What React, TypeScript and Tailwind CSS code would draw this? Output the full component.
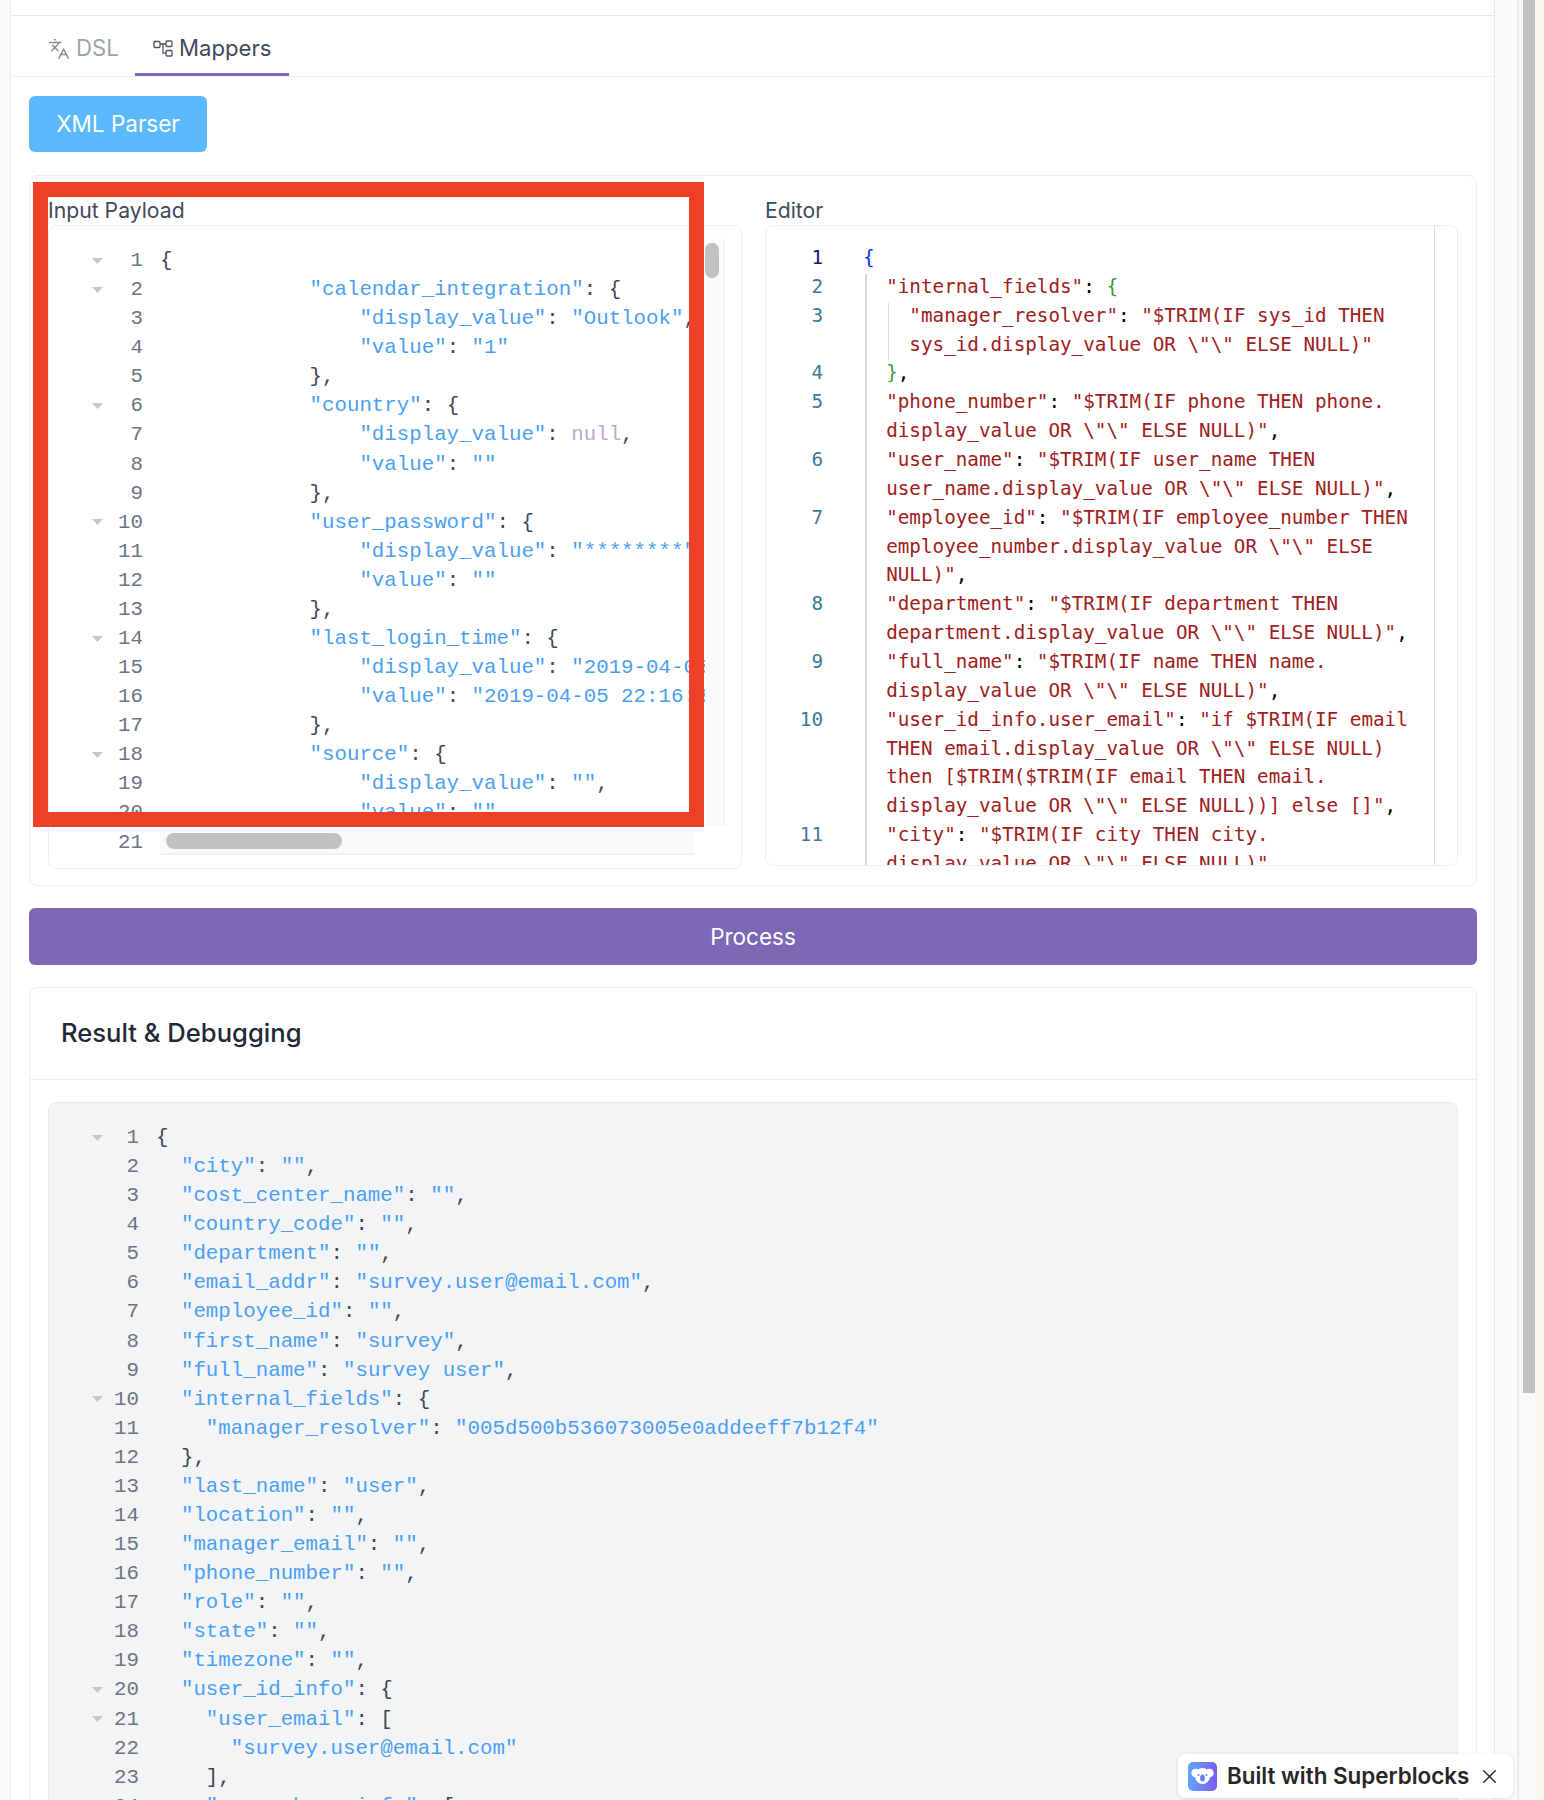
import { Languages, X } from "lucide-react";

const MONO = "font-['Liberation_Mono',monospace] text-[20.77px] leading-[29.08px]";
const DEJAVU = "font-['DejaVu_Sans_Mono',monospace] text-[19.25px] leading-[28.87px]";

const RED = "text-[#a02020]";
const BLACK = "text-black";
const BLUE = "text-[#0431fa]";
const GREEN = "text-[#3f9440]";

const inputLines = [
  "{",
  '            "calendar_integration": {',
  '                "display_value": "Outlook",',
  '                "value": "1"',
  "            },",
  '            "country": {',
  '                "display_value": null,',
  '                "value": ""',
  "            },",
  '            "user_password": {',
  '                "display_value": "********",',
  '                "value": ""',
  "            },",
  '            "last_login_time": {',
  '                "display_value": "2019-04-05 22:16:33",',
  '                "value": "2019-04-05 22:16:33"',
  "            },",
  '            "source": {',
  '                "display_value": "",',
  '                "value": ""',
  "            },",
];

const outputLines = [
  "{",
  '  "city": "",',
  '  "cost_center_name": "",',
  '  "country_code": "",',
  '  "department": "",',
  '  "email_addr": "survey.user@email.com",',
  '  "employee_id": "",',
  '  "first_name": "survey",',
  '  "full_name": "survey user",',
  '  "internal_fields": {',
  '    "manager_resolver": "005d500b536073005e0addeeff7b12f4"',
  "  },",
  '  "last_name": "user",',
  '  "location": "",',
  '  "manager_email": "",',
  '  "phone_number": "",',
  '  "role": "",',
  '  "state": "",',
  '  "timezone": "",',
  '  "user_id_info": {',
  '    "user_email": [',
  '      "survey.user@email.com"',
  "    ],",
  '    "user_phone_info": [',
];

type Part = [string, string];
type EditorRow = { n?: number; indent: number; parts: Part[] };

const key = (name: string, value: string, tail = ""): Part[] => [
  [name, RED],
  [": ", BLACK],
  [value, RED],
  [tail, BLACK],
];

const editorRows: EditorRow[] = [
  { n: 1, indent: 0, parts: [["{", BLUE]] },
  { n: 2, indent: 2, parts: [['"internal_fields"', RED], [": ", BLACK], ["{", GREEN]] },
  { n: 3, indent: 4, parts: key('"manager_resolver"', '"$TRIM(IF sys_id THEN') },
  { indent: 4, parts: [['sys_id.display_value OR \\"\\" ELSE NULL)"', RED]] },
  { n: 4, indent: 2, parts: [["}", GREEN], [",", BLACK]] },
  { n: 5, indent: 2, parts: key('"phone_number"', '"$TRIM(IF phone THEN phone.') },
  { indent: 2, parts: [['display_value OR \\"\\" ELSE NULL)"', RED], [",", BLACK]] },
  { n: 6, indent: 2, parts: key('"user_name"', '"$TRIM(IF user_name THEN') },
  { indent: 2, parts: [['user_name.display_value OR \\"\\" ELSE NULL)"', RED], [",", BLACK]] },
  { n: 7, indent: 2, parts: key('"employee_id"', '"$TRIM(IF employee_number THEN') },
  { indent: 2, parts: [['employee_number.display_value OR \\"\\" ELSE', RED]] },
  { indent: 2, parts: [['NULL)"', RED], [",", BLACK]] },
  { n: 8, indent: 2, parts: key('"department"', '"$TRIM(IF department THEN') },
  { indent: 2, parts: [['department.display_value OR \\"\\" ELSE NULL)"', RED], [",", BLACK]] },
  { n: 9, indent: 2, parts: key('"full_name"', '"$TRIM(IF name THEN name.') },
  { indent: 2, parts: [['display_value OR \\"\\" ELSE NULL)"', RED], [",", BLACK]] },
  { n: 10, indent: 2, parts: key('"user_id_info.user_email"', '"if $TRIM(IF email') },
  { indent: 2, parts: [['THEN email.display_value OR \\"\\" ELSE NULL)', RED]] },
  { indent: 2, parts: [["then [$TRIM($TRIM(IF email THEN email.", RED]] },
  { indent: 2, parts: [['display_value OR \\"\\" ELSE NULL))] else []"', RED], [",", BLACK]] },
  { n: 11, indent: 2, parts: key('"city"', '"$TRIM(IF city THEN city.') },
  { indent: 2, parts: [['display_value OR \\"\\" ELSE NULL)"', RED]] },
];

function Fold() {
  return (
    <svg width="11" height="6" viewBox="0 0 11 6" className="shrink-0">
      <path d="M0 0h11L5.5 6z" fill="#c6c7cd" />
    </svg>
  );
}

function JsonLine({ text }: { text: string }) {
  const tokens = text.match(/"[^"]*"|null|[^"n]+|n/g) ?? [];
  return (
    <span className="whitespace-pre text-[#3f4654]">
      {tokens.map((t, i) =>
        t.startsWith('"') ? (
          <span key={i} className="text-[#4b9ff2]">{t}</span>
        ) : t === "null" ? (
          <span key={i} className="text-[#c4a6cf]">{t}</span>
        ) : (
          <span key={i}>{t}</span>
        ),
      )}
    </span>
  );
}

function JsonRows({ lines, folds, numClass }: { lines: string[]; folds: number[]; numClass: string }) {
  return (
    <div className={MONO}>
      {lines.map((line, i) => (
        <div key={i} className="flex h-[29.08px] items-center">
          <div className="flex w-[54px] shrink-0 justify-start pl-[43px]">
            {folds.includes(i + 1) && <Fold />}
          </div>
          <div className={`${numClass} shrink-0 text-right text-[#6d7485]`}>{i + 1}</div>
          <JsonLine text={line} />
        </div>
      ))}
    </div>
  );
}

function MapperIcon() {
  return (
    <svg width="20" height="18" viewBox="0 0 20 18" fill="none" stroke="#4b5563" strokeWidth="1.3" className="shrink-0">
      <rect x="1" y="1.5" width="6" height="6" rx="1" />
      <rect x="13" y="1" width="6" height="5.5" rx="1" />
      <rect x="13" y="10.5" width="6" height="5.5" rx="1" />
      <path d="M7 4h6M10 4v9.2h3" />
    </svg>
  );
}

function KoalaIcon() {
  return (
    <div className="flex h-[29px] w-[29px] items-center justify-center rounded-[5px] bg-gradient-to-r from-[#5aa8fb] to-[#7a5af0]">
      <svg width="23" height="18" viewBox="0 0 23 18">
        <circle cx="4.5" cy="6" r="4.2" fill="#fff" />
        <circle cx="18.5" cy="6" r="4.2" fill="#fff" />
        <ellipse cx="11.5" cy="9" rx="7.5" ry="8" fill="#fff" />
        <circle cx="7.5" cy="8" r="1" fill="#6d7df5" />
        <circle cx="15.5" cy="8" r="1" fill="#6d7df5" />
        <ellipse cx="11.5" cy="11" rx="2.4" ry="3.6" fill="#6d7df5" />
      </svg>
    </div>
  );
}

export default function App() {
  return (
    <div className="relative flex h-[1800px] w-[1544px] overflow-hidden bg-[#f8fafc] font-['Inter',sans-serif]">
      <div className="w-[10px] shrink-0" />

      <div className="w-[1485px] shrink-0 border-x border-[#e8eaee] bg-white">
        <div className="h-[16px] border-b border-[#e5e7eb]" />

        <div className="flex h-[61px] border-b border-[#f0f1f3] pl-[20px] text-[22.16px]">
          <div className="flex h-[60px] w-[104px] items-center gap-[6px] pl-[17px] pt-[6px] text-[#9ca3af]">
            <Languages size={22} strokeWidth={1.6} className="shrink-0 text-[#858b99]" />
            <span>DSL</span>
          </div>
          <div className="flex h-[60px] w-[154px] items-center gap-[6px] border-b-[3px] border-[#7c68b6] pl-[18px] pt-[9px] text-[#414a5c]">
            <MapperIcon />
            <span>Mappers</span>
          </div>
        </div>

        <div className="px-[18px] pt-[19px]">
          <button className="flex h-[56px] w-[178px] items-center justify-center rounded-[6px] bg-[#5bb8fb] text-[22.5px] text-white">
            XML Parser
          </button>

          <div className="mt-[23px] flex h-[711px] w-[1448px] gap-[23px] rounded-[8px] border border-[#eceef1] pl-[18px] pr-[18px]">
            <div className="w-[694px]">
              <div className="flex h-[49px] items-end text-[21.2px] leading-[29px] text-[#414a5c]">Input Payload</div>
              <div className="relative h-[644px] overflow-hidden rounded-[8px] border border-[#eceef1] pt-[20px]">
                <div className="w-[656px] overflow-hidden">
                  <JsonRows lines={inputLines} folds={[1, 2, 6, 10, 14, 18]} numClass="w-[40px] mr-[17px]" />
                </div>
                {/* scrollbars sit over the code */}
                <div className="absolute left-[656px] top-[13px] h-[587px] w-[20px] border-r border-[#f0f0f0] bg-[#fafafa]">
                  <div className="mt-[4px] h-[35px] w-[14px] rounded-[7px] bg-[#c1c1c1]" />
                </div>
                <div className="absolute left-[111px] top-[602px] h-[27px] w-[534px] border-b-2 border-[#f0f0f0] bg-[#fafafa] pl-[6px] pt-[5px]">
                  <div className="h-[16px] w-[176px] rounded-[8px] bg-[#c1c1c1]" />
                </div>
              </div>
            </div>

            <div className="w-[693px]">
              <div className="flex h-[49px] items-end text-[21.2px] leading-[29px] text-[#414a5c]">Editor</div>
              <div className="relative flex h-[641px] overflow-hidden rounded-[8px] border border-[#eceef1]">
                <div className={`w-[668px] shrink-0 overflow-hidden pt-[18px] ${DEJAVU}`}>
                  {editorRows.map((row, i) => (
                    <div key={i} className="flex h-[28.87px]">
                      <div className={`w-[57px] shrink-0 text-right ${row.n === 1 ? "text-[#0b216f]" : "text-[#3a7a9a]"}`}>
                        {row.n}
                      </div>
                      <div className="ml-[40px] whitespace-pre">
                        {" ".repeat(row.indent)}
                        {row.parts.map(([t, c], j) => (
                          <span key={j} className={c}>{t}</span>
                        ))}
                      </div>
                    </div>
                  ))}
                </div>
                <div className="w-[23px] border-l border-[#d9d9d9]" />
                {/* indent guides */}
                <div className="absolute left-[99px] top-[48px] h-[600px] w-[2px] bg-[#d8d8d8]" />
                <div className="absolute left-[122px] top-[77px] h-[57px] w-[1px] bg-[#d8d8d8]" />
              </div>
            </div>
          </div>

          <button className="mt-[22px] flex h-[57px] w-[1448px] items-center justify-center rounded-[6px] bg-[#7c68b6] pt-[1px] text-[22.5px] text-white">
            Process
          </button>

          <div className="mt-[22px] h-[900px] w-[1448px] rounded-[8px] border border-[#eceef1]">
            <div className="flex h-[92px] items-center border-b border-[#eceef1] pl-[31px] text-[25.6px] font-medium text-[#1f2937]">
              Result &amp; Debugging
            </div>
            <div className="ml-[18px] mr-[18px] mt-[22px] h-[760px] rounded-[8px] border border-[#e9ebee] bg-[#f3f4f6] pt-[20px]">
              <JsonRows lines={outputLines} folds={[1, 10, 20, 21, 24]} numClass="w-[36px] mr-[17px]" />
            </div>
          </div>
        </div>
      </div>

      <div className="w-[24px] shrink-0 border-r-2 border-[#e8eaee]" />

      <div className="w-[18px] shrink-0 bg-[#f8f8f8] pl-[4px]">
        <div className="h-[1393px] w-[12px] bg-[#c1c1c1]" />
      </div>
      <div className="flex-1 bg-[#f9f6ec]" />

      {/* red annotation drawn on the screenshot */}
      <div className="absolute left-[33px] top-[182px] h-[645px] w-[671px] border-[15px] border-[#ec4027]" />

      <div className="absolute left-[1178px] top-[1754px] flex h-[44px] w-[335px] items-center rounded-[8px] bg-white pl-[10px] shadow-[0_1px_4px_rgba(0,0,0,0.12)]">
        <KoalaIcon />
        <span className="ml-[10px] whitespace-nowrap text-[22.4px] font-semibold text-[#262626]">Built with Superblocks</span>
        <X size={23} strokeWidth={1.5} className="ml-[9px] shrink-0 text-[#262626]" />
      </div>
    </div>
  );
}
